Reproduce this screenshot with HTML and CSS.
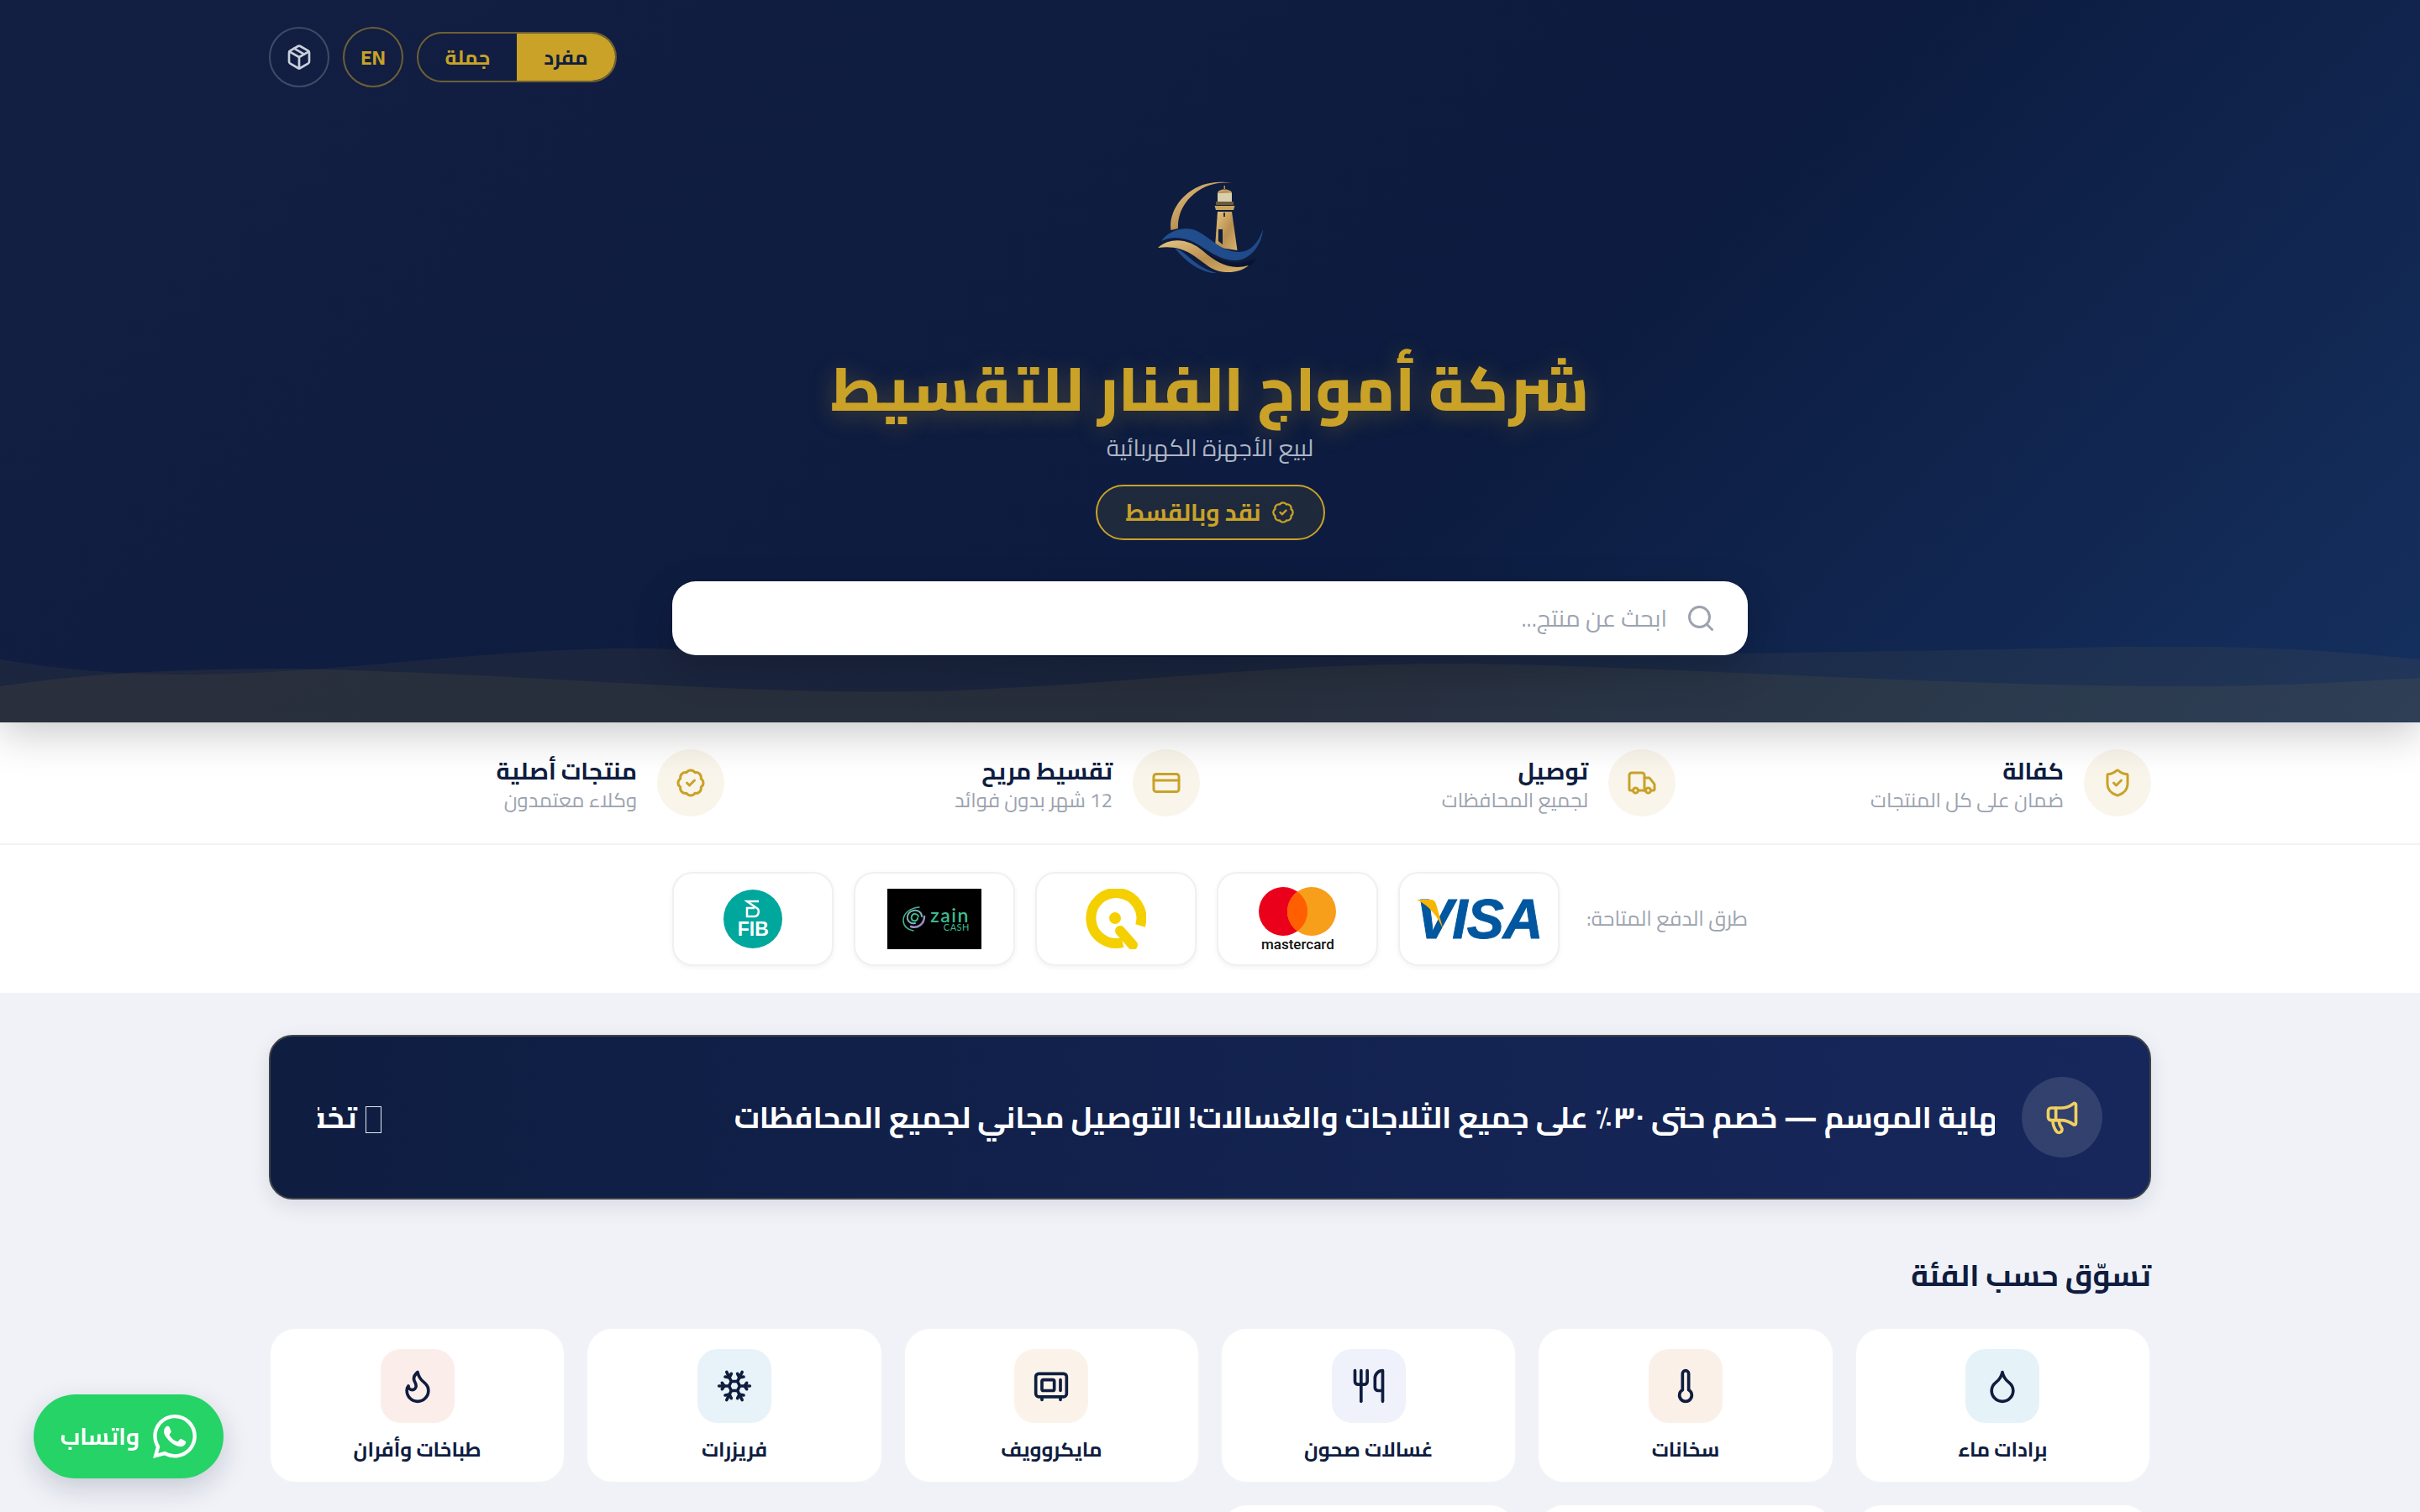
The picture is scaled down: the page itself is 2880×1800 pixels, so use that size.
FILE: index.html
```html
<!DOCTYPE html>
<html lang="ar" dir="rtl">
<head>
  <meta charset="UTF-8">
  <title>شركة أمواج الفنار للتقسيط</title>
  <link rel="stylesheet" href="styles.css">
</head>
<body>
  <header class="hero">
    <div class="top-bar">
      <div class="mode-switch">
        <button class="mode-btn active">مفرد</button>
        <button class="mode-btn">جملة</button>
      </div>
      <button class="round-btn lang">EN</button>
      <button class="round-btn track">
        <svg class="ico" width="32" height="32" viewBox="0 0 24 24"><path d="M21 8a2 2 0 0 0-1-1.73l-7-4a2 2 0 0 0-2 0l-7 4A2 2 0 0 0 3 8v8a2 2 0 0 0 1 1.73l7 4a2 2 0 0 0 2 0l7-4A2 2 0 0 0 21 16Z"/><path d="m3.3 7 8.7 5 8.7-5"/><path d="M12 22V12"/><path d="m7.5 4.27 9 5.15"/></svg>
      </button>
    </div>

    <svg class="logo" width="140" height="125" viewBox="0 0 140 125">
      <defs>
        <linearGradient id="gold" x1="0" y1="0" x2="1" y2="1">
          <stop offset="0" stop-color="#e6c583"/>
          <stop offset="0.55" stop-color="#b88f4f"/>
          <stop offset="1" stop-color="#d9b26f"/>
        </linearGradient>
        <linearGradient id="sea" x1="0" y1="0" x2="1" y2="0">
          <stop offset="0" stop-color="#234f8f"/>
          <stop offset="1" stop-color="#1f4a8a"/>
        </linearGradient>
      </defs>
      <path fill="url(#gold)" d="M23.5 67C19 41 48 2 96 11 61 6 30 34 32 65Z"/>
      <path fill="url(#gold)" d="M76 87 79 45H96L102.500 91Z"/>
      <path fill="#0e1d40" d="M80 80V66H85V84Z"/>
      <rect x="86" y="46" width="2" height="5" fill="#3a3020"/>
      <path fill="#c9a45f" d="M75.500 38H99.500L98 43H77Z"/>
      <rect x="79" y="23" width="17" height="13" fill="#d8cfae"/>
      <rect x="77" y="33" width="21" height="4" fill="#6d5a35"/>
      <path fill="url(#gold)" d="M79 23C79 17 96 17 96 23Z"/>
      <rect x="86.500" y="14" width="1.500" height="4" fill="#b88f4f"/>
      <path fill="url(#sea)" d="M12 80C22 66 44 60 60 71 76 82 88 93 104 93 120 93 128 80 133 66 132 84 118 103 100 103 82 103 68 91 52 82 38 75 24 74 12 80Z"/>
      <path fill="#0a1430" d="M20 83C38 74 52 84 70 96 88 108 106 109 126 100L120 108C100 118 84 114 66 100 48 87 36 80 20 83Z"/>
      <path fill="url(#sea)" d="M28 88C44 94 50 110 78 118 62 119 42 106 28 88Z"/>
      <path fill="url(#gold)" d="M8 88C24 74 46 78 62 92 78 106 94 115 116 109 106 118 84 121 68 110 50 97 38 84 8 88Z"/>
    </svg>

    <h1 class="hero-title">شركة أمواج الفنار للتقسيط</h1>
    <p class="hero-sub">لبيع الأجهزة الكهربائية</p>
    <div class="hero-badge">
      <svg class="ico" width="28" height="28" viewBox="0 0 24 24"><path d="M3.850 8.620a4 4 0 0 1 4.780-4.770 4 4 0 0 1 6.740 0 4 4 0 0 1 4.780 4.780 4 4 0 0 1 0 6.740 4 4 0 0 1-4.770 4.780 4 4 0 0 1-6.750 0 4 4 0 0 1-4.780-4.770 4 4 0 0 1 0-6.760Z"/><path d="m9 12 2 2 4-4"/></svg>
      <span>نقد وبالقسط</span>
    </div>

    <div class="search-box">
      <svg class="ico" width="36" height="36" viewBox="0 0 24 24"><circle cx="11" cy="11" r="8"/><path d="m21 21-4.300-4.300"/></svg>
      <input class="search-input" type="text" placeholder="ابحث عن منتج...">
    </div>

    <svg class="waves" viewBox="0 0 2880 90" preserveAspectRatio="none">
      <path class="wave-back" d="M0 15C90 30 170 35 275 32 450 26 640 -5 808 3 1200 20 2100 10 2516 0 2660 -3 2790 5 2880 15V90H0Z"/>
      <path class="wave-front" d="M0 47C110 30 220 26 349 26 640 32 900 60 1139 52 1400 40 1500 20 1745 20 2000 24 2330 48 2627 47 2740 46 2820 40 2880 37V90H0Z"/>
    </svg>
  </header>

  <section class="features">
    <div class="feature">
      <div class="feature-icon">
        <svg class="ico" width="36" height="36" viewBox="0 0 24 24"><path d="M20 13c0 5-3.500 7.500-7.660 8.950a1 1 0 0 1-.67-.01C7.500 20.500 4 18 4 13V6a1 1 0 0 1 1-1c2 0 4.500-1.200 6.240-2.720a1.170 1.170 0 0 1 1.520 0C14.510 3.810 17 5 19 5a1 1 0 0 1 1 1z"/><path d="m9 12 2 2 4-4"/></svg>
      </div>
      <div class="feature-text">
        <div class="feature-title">كفالة</div>
        <div class="feature-sub">ضمان على كل المنتجات</div>
      </div>
    </div>
    <div class="feature">
      <div class="feature-icon">
        <svg class="ico" width="36" height="36" viewBox="0 0 24 24"><path d="M14 18V6a2 2 0 0 0-2-2H4a2 2 0 0 0-2 2v11a1 1 0 0 0 1 1h2"/><path d="M15 18H9"/><path d="M19 18h2a1 1 0 0 0 1-1v-3.650a1 1 0 0 0-.22-.624l-3.480-4.350A1 1 0 0 0 17.520 8H14"/><circle cx="17" cy="18" r="2"/><circle cx="7" cy="18" r="2"/></svg>
      </div>
      <div class="feature-text">
        <div class="feature-title">توصيل</div>
        <div class="feature-sub">لجميع المحافظات</div>
      </div>
    </div>
    <div class="feature">
      <div class="feature-icon">
        <svg class="ico" width="36" height="36" viewBox="0 0 24 24"><rect width="20" height="14" x="2" y="5" rx="2"/><path d="M2 10h20"/></svg>
      </div>
      <div class="feature-text">
        <div class="feature-title">تقسيط مريح</div>
        <div class="feature-sub">12 شهر بدون فوائد</div>
      </div>
    </div>
    <div class="feature">
      <div class="feature-icon">
        <svg class="ico" width="36" height="36" viewBox="0 0 24 24"><path d="M3.850 8.620a4 4 0 0 1 4.780-4.770 4 4 0 0 1 6.740 0 4 4 0 0 1 4.780 4.780 4 4 0 0 1 0 6.740 4 4 0 0 1-4.770 4.780 4 4 0 0 1-6.750 0 4 4 0 0 1-4.780-4.770 4 4 0 0 1 0-6.760Z"/><path d="m9 12 2 2 4-4"/></svg>
      </div>
      <div class="feature-text">
        <div class="feature-title">منتجات أصلية</div>
        <div class="feature-sub">وكلاء معتمدون</div>
      </div>
    </div>
  </section>

  <section class="payments">
    <div class="payments-inner">
      <span class="payments-label">طرق الدفع المتاحة:</span>
      <div class="pay-card">
        <svg class="visa-flag" width="34" height="40" viewBox="0 0 34 40"><path fill="#f7b600" d="M0 1H16C20 1 22 3 23 6L32 38C26 22 15 8 0 1Z"/></svg>
        <span class="visa-text">VISA</span>
      </div>
      <div class="pay-card">
        <svg width="92" height="58" viewBox="0 0 92 58"><circle cx="29" cy="29" r="29" fill="#eb001b"/><circle cx="63" cy="29" r="29" fill="#f79e1b"/><path fill="#ff5f00" d="M46 5.500a29 29 0 0 1 0 47 29 29 0 0 1 0-47Z"/></svg>
        <span class="mc-text">mastercard</span>
      </div>
      <div class="pay-card">
        <svg width="72" height="72" viewBox="0 0 72 72"><path fill="none" stroke="#f5d000" stroke-width="12" d="M44 64A30 30 0 1 1 65 44"/><circle cx="35" cy="35" r="7" fill="#f5d000"/><path stroke="#f5d000" stroke-width="12" stroke-linecap="round" d="M41 50 56 67"/></svg>
      </div>
      <div class="pay-card">
        <div class="zain">
          <svg width="30" height="32" viewBox="0 0 30 32" fill="none" stroke-linecap="round"><path stroke="#3fb98f" stroke-width="1.500" d="M21 2C10 3 2 9 2 18c0 6 5 11 12 12"/><path stroke="#9a8fc6" stroke-width="2.500" d="M27 13c0 9-8 15-16 12"/><path stroke="#7fb5b5" stroke-width="2" d="M24 13c0-5-5-8-10-7-5 1-8 5-7 10 1 4 5 6 9 5"/><path stroke="#3fb98f" stroke-width="2" d="M20 13c-1-3-5-4-7-2-2 2-2 6 1 7 3 1 5-1 5-3"/></svg>
          <div class="zain-text"><span class="zain-name">zain</span><span class="zain-cash">CASH</span></div>
        </div>
      </div>
      <div class="pay-card">
        <div class="fib">
          <svg width="20" height="24" viewBox="0 0 20 24" fill="none" stroke="#fff" stroke-width="2.500"><path d="M17 2H3L16 11C18 15 16 20 12 20H3V10H12"/></svg>
          <span>FIB</span>
        </div>
      </div>
    </div>
  </section>

  <main class="content">
    <div class="promo">
      <div class="promo-icon">
        <svg class="ico" width="44" height="44" viewBox="0 0 24 24"><path d="M11 6a13 13 0 0 0 8.400-2.800A1 1 0 0 1 21 4v12a1 1 0 0 1-1.600.8A13 13 0 0 0 11 14H5a2 2 0 0 1-2-2V8a2 2 0 0 1 2-2z"/><path d="M6 14a12 12 0 0 0 2.400 7.200 2 2 0 0 0 3.200-2.400A8 8 0 0 1 10 14"/><path d="M8 6v8"/></svg>
      </div>
      <div class="promo-clip">
        <div class="promo-track">
          <span>نهاية الموسم — خصم حتى ٣٠٪ على جميع الثلاجات والغسالات! التوصيل مجاني لجميع المحافظات</span>
          <span class="promo-next"><i class="tofu"></i>تخفيضات كبرى على جميع الأجهزة الكهربائية</span>
        </div>
      </div>
    </div>

    <h2 class="section-title">تسوّق حسب الفئة</h2>

    <div class="cat-grid">
      <a class="cat-card">
        <span class="cat-icon c-sky"><svg class="ico" width="44" height="44" viewBox="0 0 24 24"><path d="M12 22a7 7 0 0 0 7-7c0-2-1-3.900-3-5.500s-3.500-4-4-6.500c-.5 2.500-2 4.900-4 6.500C6 11.100 5 13 5 15a7 7 0 0 0 7 7z"/></svg></span>
        <span class="cat-name">برادات ماء</span>
      </a>
      <a class="cat-card">
        <span class="cat-icon c-peach"><svg class="ico" width="44" height="44" viewBox="0 0 24 24"><path d="M14 4v10.540a4 4 0 1 1-4 0V4a2 2 0 0 1 4 0Z"/></svg></span>
        <span class="cat-name">سخانات</span>
      </a>
      <a class="cat-card">
        <span class="cat-icon c-lav"><svg class="ico" width="44" height="44" viewBox="0 0 24 24"><path d="M3 2v7c0 1.100.9 2 2 2h4a2 2 0 0 0 2-2V2"/><path d="M7 2v20"/><path d="M21 15V2a5 5 0 0 0-5 5v6c0 1.100.9 2 2 2h3Zm0 0v7"/></svg></span>
        <span class="cat-name">غسالات صحون</span>
      </a>
      <a class="cat-card">
        <span class="cat-icon c-cream"><svg class="ico" width="44" height="44" viewBox="0 0 24 24"><rect width="20" height="15" x="2" y="4" rx="2"/><rect width="8" height="7" x="6" y="8" rx="1"/><path d="M18 8v7"/><path d="M6 19v2"/><path d="M18 19v2"/></svg></span>
        <span class="cat-name">مايكروويف</span>
      </a>
      <a class="cat-card">
        <span class="cat-icon c-ice"><svg class="ico" width="44" height="44" viewBox="0 0 24 24"><path d="m10 20-1.250-2.500L6 18"/><path d="M10 4 8.750 6.500 6 6"/><path d="m14 20 1.250-2.500L18 18"/><path d="m14 4 1.250 2.500L18 6"/><path d="m17 21-3-6h-4"/><path d="m17 3-3 6 1.500 3"/><path d="M2 12h6.500L10 9"/><path d="m20 10-1.500 2 1.500 2"/><path d="M22 12h-6.500L14 15"/><path d="m4 10 1.500 2L4 14"/><path d="m7 21 3-6-1.500-3"/><path d="m7 3 3 6h4"/></svg></span>
        <span class="cat-name">فريزرات</span>
      </a>
      <a class="cat-card">
        <span class="cat-icon c-rose"><svg class="ico" width="44" height="44" viewBox="0 0 24 24"><path d="M8.500 14.500A2.500 2.500 0 0 0 11 12c0-1.380-.5-2-1-3-1.072-2.143-.224-4.054 2-6 .5 2.500 2 4.900 4 6.500 2 1.600 3 3.500 3 5.500a7 7 0 1 1-14 0c0-1.153.433-2.294 1-3a2.500 2.500 0 0 0 2.500 2.500z"/></svg></span>
        <span class="cat-name">طباخات وأفران</span>
      </a>
      <a class="cat-card"></a>
      <a class="cat-card"></a>
      <a class="cat-card"></a>
    </div>
  </main>

  <a class="wa-btn">
    <svg width="52" height="52" viewBox="0 0 24 24" fill="#fff"><path d="M17.472 14.382c-.297-.149-1.758-.867-2.030-.967-.273-.099-.471-.148-.67.150-.197.297-.767.966-.94 1.164-.173.199-.347.223-.644.075-.297-.150-1.255-.463-2.390-1.475-.883-.788-1.480-1.761-1.653-2.059-.173-.297-.018-.458.130-.606.134-.133.298-.347.446-.520.149-.174.198-.298.298-.497.099-.198.050-.371-.025-.520-.075-.149-.669-1.612-.916-2.207-.242-.579-.487-.5-.669-.510-.173-.008-.371-.010-.570-.010-.198 0-.520.074-.792.372-.272.297-1.040 1.016-1.040 2.479 0 1.462 1.065 2.875 1.213 3.074.149.198 2.096 3.200 5.077 4.487.709.306 1.262.489 1.694.625.712.227 1.360.195 1.871.118.571-.085 1.758-.719 2.006-1.413.248-.694.248-1.289.173-1.413-.074-.124-.272-.198-.570-.347m-5.421 7.403h-.004a9.870 9.870 0 01-5.031-1.378l-.361-.214-3.741.982.998-3.648-.235-.374a9.860 9.860 0 01-1.510-5.260c.001-5.450 4.436-9.884 9.888-9.884 2.640 0 5.122 1.030 6.988 2.898a9.825 9.825 0 012.893 6.994c-.003 5.450-4.437 9.884-9.885 9.884m8.413-18.297A11.815 11.815 0 0012.050 0C5.495 0 .16 5.335.157 11.892c0 2.096.547 4.142 1.588 5.945L.057 24l6.305-1.654a11.882 11.882 0 005.683 1.448h.005c6.554 0 11.890-5.335 11.893-11.893a11.821 11.821 0 00-3.480-8.413z"/></svg>
    <span>واتساب</span>
  </a>
</body>
</html>
```

FILE: styles.css
```css
* {
  box-sizing: border-box;
}
html, body {
  height: 1800px;
  overflow: hidden;
}
body {
  margin: 0;
  background: #f0f2f7;
  color: #0f1d3f;
  font-family: "Cairo", "Noto Kufi Arabic", "Noto Sans Arabic", "Noto Sans", "DejaVu Sans", sans-serif;
}
button {
  font-family: inherit;
  cursor: pointer;
}
.ico {
  fill: none;
  stroke: currentColor;
  stroke-width: 2;
  stroke-linecap: round;
  stroke-linejoin: round;
}

/* hero */
.hero {
  position: relative;
  z-index: 2;
  height: 860px;
  padding: 32px 320px 0;
  display: flex;
  flex-direction: column;
  align-items: center;
  background: linear-gradient(135deg, #131f42 0%, #0c1b3f 60%, #15305f 100%);
  box-shadow: 0 12px 48px rgba(0, 0, 0, 0.22);
}
.top-bar {
  width: 100%;
  display: flex;
  align-items: center;
  gap: 16px;
  justify-content: flex-end;
}
.mode-switch {
  display: flex;
  height: 60px;
  border: 2px solid rgba(201, 162, 39, 0.5);
  border-radius: 30px;
  overflow: hidden;
}
.mode-btn {
  width: 117px;
  border: 0;
  background: transparent;
  color: #c9a227;
  font-size: 24px;
  font-weight: 700;
}
.mode-btn.active {
  background: #c9a227;
  color: #0f1d3f;
}
.round-btn {
  width: 72px;
  height: 72px;
  padding: 0;
  border-radius: 50%;
  background: transparent;
  display: flex;
  align-items: center;
  justify-content: center;
}
.lang {
  border: 2px solid rgba(201, 162, 39, 0.5);
  color: #c9a227;
  font-size: 24px;
  font-weight: 700;
}
.track {
  border: 2px solid rgba(255, 255, 255, 0.2);
  color: #c9cfdc;
}
.logo {
  margin-top: 103px;
}
.hero-title {
  margin: 87px 0 0;
  color: #c9a227;
  font-size: 73px;
  line-height: 88px;
  font-weight: 800;
  text-shadow: 0 4px 28px rgba(201, 162, 39, 0.3);
}
.hero-sub {
  margin: 6px 0 0;
  color: #aeb5c4;
  font-size: 28px;
  line-height: 40px;
}
.hero-badge {
  margin-top: 24px;
  height: 66px;
  padding: 0 34px;
  display: flex;
  align-items: center;
  gap: 12px;
  color: #c9a227;
  font-size: 28px;
  font-weight: 700;
  border: 2px solid #c9a227;
  border-radius: 33px;
  background: rgba(201, 162, 39, 0.1);
}
.search-box {
  position: relative;
  z-index: 1;
  margin-top: 49px;
  width: 1280px;
  height: 88px;
  padding: 0 38px;
  display: flex;
  align-items: center;
  gap: 20px;
  background: #fff;
  border-radius: 28px;
  color: #9ca3af;
  box-shadow: 0 16px 48px rgba(0, 0, 0, 0.2);
}
.search-input {
  flex: 1;
  border: 0;
  outline: 0;
  font-family: inherit;
  font-size: 28px;
}
.search-input::placeholder {
  color: #9ca3af;
}
.waves {
  position: absolute;
  left: 0;
  bottom: 0;
  width: 100%;
  height: 90px;
}
.wave-back {
  fill: rgba(201, 162, 39, 0.07);
}
.wave-front {
  fill: rgba(201, 162, 39, 0.08);
}

/* strip under the hero */
.features {
  height: 146px;
  padding: 0 320px;
  display: grid;
  grid-template-columns: repeat(4, 1fr);
  gap: 24px;
  align-items: center;
  background: #fff;
  border-bottom: 2px solid #f0f2f7;
}
.feature {
  display: flex;
  align-items: center;
  gap: 24px;
}
.feature-icon {
  width: 80px;
  height: 80px;
  flex: none;
  border-radius: 50%;
  display: flex;
  align-items: center;
  justify-content: center;
  background: #f9f5ea;
  color: #c9a227;
}
.feature-text {
  padding-top: 6px;
}
.feature-title {
  font-size: 28px;
  line-height: 36px;
  font-weight: 700;
}
.feature-sub {
  font-size: 24px;
  line-height: 34px;
  color: #9ca3af;
}

.payments {
  height: 176px;
  background: #fff;
  display: flex;
  align-items: center;
  justify-content: center;
}
.payments-inner {
  width: 1280px;
  display: flex;
  align-items: center;
  gap: 24px;
}
.payments-label {
  margin-left: 8px;
  margin-top: -2px;
  font-size: 24.5px;
  color: #9ca3af;
}
.pay-card {
  position: relative;
  width: 192px;
  height: 112px;
  display: flex;
  flex-direction: column;
  align-items: center;
  justify-content: center;
  background: #fff;
  border: 2px solid #f0f0f2;
  border-radius: 24px;
  box-shadow: 0 2px 6px rgba(0, 0, 0, 0.05);
}
.visa-flag {
  position: absolute;
  left: 20px;
  top: 30px;
}
.visa-text {
  direction: ltr;
  font-family: "Liberation Sans", sans-serif;
  font-size: 66px;
  line-height: 66px;
  font-weight: 700;
  font-style: italic;
  letter-spacing: -1px;
  color: #00579f;
  -webkit-text-stroke: 1px #00579f;
}
.mc-text {
  margin-top: 2px;
  direction: ltr;
  font-family: "Roboto", sans-serif;
  font-size: 17px;
  line-height: 16px;
  font-weight: 500;
  color: #111;
}
.zain {
  width: 112px;
  height: 72px;
  padding-left: 17px;
  display: flex;
  direction: ltr;
  align-items: center;
  gap: 4px;
  background: #000;
}
.zain-text {
  display: flex;
  flex-direction: column;
  align-items: flex-end;
  font-family: "Lato", sans-serif;
  color: #3fb98f;
  line-height: 1;
}
.zain-name {
  font-size: 23px;
  line-height: 18px;
  font-weight: 600;
  letter-spacing: 1.5px;
}
.zain-cash {
  font-size: 11px;
  letter-spacing: 0.5px;
}
.fib {
  width: 70px;
  height: 70px;
  border-radius: 50%;
  background: #00a79d;
  color: #fff;
  display: flex;
  flex-direction: column;
  align-items: center;
  justify-content: center;
  direction: ltr;
  font-family: "Liberation Sans", sans-serif;
  font-size: 23px;
  line-height: 22px;
  font-weight: 700;
}

/* main column */
.content {
  padding: 50px 320px 0;
}
.promo {
  height: 196px;
  padding: 0 56px;
  display: flex;
  align-items: center;
  gap: 32px;
  border: 2px solid #404448;
  border-radius: 28px;
  background: linear-gradient(90deg, #0e1d40 0%, #17275c 100%);
  box-shadow: 0 8px 24px rgba(15, 29, 63, 0.1);
}
.promo-icon {
  width: 96px;
  height: 96px;
  flex: none;
  border-radius: 50%;
  display: flex;
  align-items: center;
  justify-content: center;
  background: rgba(255, 255, 255, 0.12);
  color: #f0d060;
}
.promo-clip {
  flex: 1;
  overflow: hidden;
}
.promo-track {
  display: flex;
  gap: 420px;
  margin-right: -16px;
  white-space: nowrap;
  color: #fff;
  font-size: 36px;
  font-weight: 700;
}
.tofu {
  display: inline-block;
  width: 19px;
  height: 32px;
  margin-left: 10px;
  vertical-align: -6px;
  border: 1px solid #e6e8ee;
}
.section-title {
  margin: 62px 0 0;
  font-size: 36px;
  line-height: 56px;
  font-weight: 700;
}
.cat-grid {
  margin-top: 34px;
  display: grid;
  grid-template-columns: repeat(6, 1fr);
  gap: 24px;
}
.cat-card {
  height: 186px;
  padding-top: 24px;
  display: flex;
  flex-direction: column;
  align-items: center;
  background: #fff;
  border: 2px solid #f2f3f6;
  border-radius: 32px;
}
.cat-icon {
  width: 88px;
  height: 88px;
  border-radius: 24px;
  display: flex;
  align-items: center;
  justify-content: center;
  color: #0f1d3f;
}
.c-sky { background: #e5f3f9; }
.c-peach { background: #fbf0e8; }
.c-lav { background: #eff1fb; }
.c-cream { background: #fbf3e9; }
.c-ice { background: #e7f3f8; }
.c-rose { background: #fbeeea; }
.cat-name {
  margin-top: 16px;
  font-size: 24px;
  line-height: 32px;
  font-weight: 700;
}

.wa-btn {
  position: fixed;
  left: 40px;
  bottom: 40px;
  width: 226px;
  height: 100px;
  display: flex;
  align-items: center;
  justify-content: center;
  gap: 16px;
  background: #25d366;
  color: #fff;
  border-radius: 50px;
  font-size: 28px;
  font-weight: 700;
  box-shadow: 0 12px 32px rgba(15, 29, 63, 0.18);
}
```
